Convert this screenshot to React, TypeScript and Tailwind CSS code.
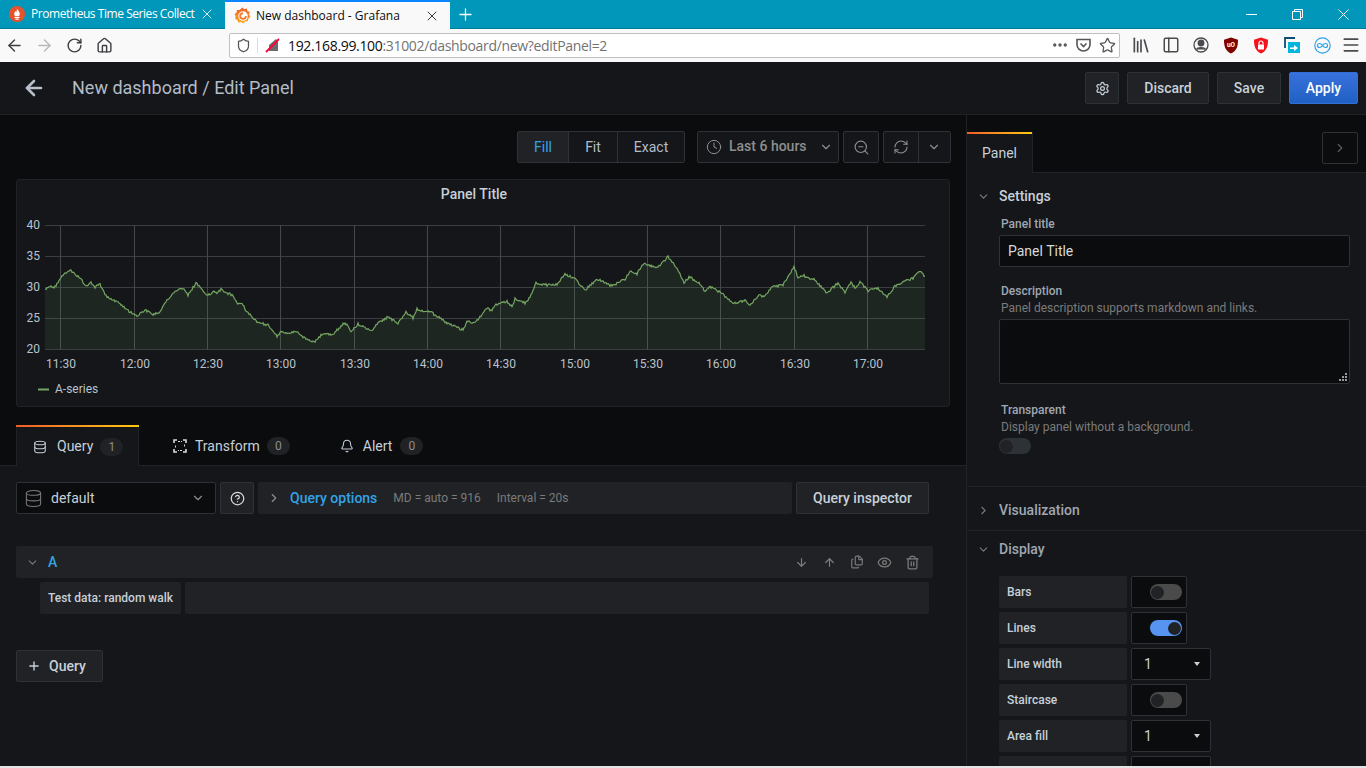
import { ReactNode } from "react";
import {
    ArrowDown,
    ArrowLeft,
    ArrowRight,
    ArrowUp,
    Bell,
    ChevronDown,
    ChevronRight,
    CircleHelp,
    Clock,
    Database,
    Ellipsis,
    Eye,
    Files,
    House,
    Library,
    Menu,
    PanelLeft,
    Plus,
    RefreshCw,
    RotateCw,
    Settings,
    Shield,
    Star,
    Trash2,
    X,
    ZoomOut,
} from "lucide-react";

// hand-read points of the series, jittered below to look like a random walk
const anchors: number[][] = [
    [45, 290], [50, 286], [55, 287], [60, 278], [70, 270], [80, 278], [87, 287], [91, 283], [95, 287], [100, 284],
    [105, 295], [117, 302], [123, 306], [130, 312], [137, 316], [145, 310], [153, 314], [160, 312], [165, 302],
    [175, 292], [183, 288], [188, 295], [196, 283], [207, 296], [213, 292], [218, 293], [221, 289], [227, 293],
    [232, 295], [237, 303], [242, 303], [247, 312], [257, 322], [268, 325], [277, 336], [282, 331], [287, 334],
    [296, 331], [302, 337], [315, 342], [323, 333], [332, 335], [345, 322], [351, 332], [358, 324], [372, 331],
    [378, 323], [388, 317], [398, 323], [406, 312], [413, 318], [417, 309], [432, 313], [447, 323], [463, 330],
    [467, 321], [474, 323], [480, 317], [487, 308], [492, 311], [495, 305], [507, 301], [512, 307], [515, 299],
    [525, 303], [530, 297], [536, 283], [547, 285], [558, 284], [565, 274], [575, 279], [585, 290], [597, 279],
    [612, 286], [625, 279], [630, 271], [637, 274], [643, 264], [658, 267], [668, 257], [677, 268], [684, 283],
    [689, 277], [698, 282], [705, 291], [710, 287], [720, 292], [727, 298], [733, 304], [745, 300], [750, 305],
    [759, 295], [764, 297], [772, 287], [783, 285], [794, 267], [798, 277], [803, 275], [808, 278], [814, 279],
    [827, 293], [838, 283], [845, 292], [851, 282], [855, 288], [860, 282], [868, 291], [878, 288], [887, 297],
    [895, 286], [913, 278], [920, 271], [925, 277],
];

const buildSeries = () => {
    let seed = 17;
    const out: string[] = [];
    let a = 0;
    for (let x = 45; x <= 925; x += 1) {
        while (a < anchors.length - 2 && anchors[a + 1][0] < x) a++;
        const [x0, y0] = anchors[a];
        const [x1, y1] = anchors[a + 1];
        const t = Math.min(1, (x - x0) / (x1 - x0));
        seed = (seed * 1103515245 + 12345) % 2147483648;
        const jitter = (Math.floor(seed / 65536) % 1000) / 1000 - 0.5;
        out.push(`${x - 17},${(y0 + (y1 - y0) * t + jitter * 2.4 - 180).toFixed(1)}`);
    }
    return out;
};

const series = buildSeries();
const hours = ["11:30", "12:00", "12:30", "13:00", "13:30", "14:00", "14:30", "15:00", "15:30", "16:00", "16:30", "17:00"];
const hourX = [60, 134, 207, 280, 354, 427, 500, 574, 647, 720, 794, 867];
const values = [40, 35, 30, 25, 20];

const Chart = () => (
    <svg width="932" height="226" className="block" fontFamily="Roboto, sans-serif" fontSize="12" fill="#b9c2cc">
        <text x="457" y="19" textAnchor="middle" fontSize="14" fontWeight="500" fill="#c7d0d9">
            Panel Title
        </text>
        {values.map((v, i) => (
            <g key={v}>
                <line x1="28" x2="908" y1={45.5 + i * 31} y2={45.5 + i * 31} stroke="#3c3d40" />
                <text x="23" y={49 + i * 31} textAnchor="end">
                    {v}
                </text>
            </g>
        ))}
        {hourX.map((x, i) => (
            <g key={x}>
                <line x1={x - 16.5} x2={x - 16.5} y1="45" y2="169" stroke="#46474a" />
                <text x={x - 16} y="188" textAnchor="middle">
                    {hours[i]}
                </text>
            </g>
        ))}
        <polygon points={`28,169 ${series.join(" ")} 908,169`} fill="#73bf69" fillOpacity="0.1" />
        <polyline points={series.join(" ")} fill="none" stroke="#75a562" strokeWidth="1.2" />
        <line x1="21" x2="32" y1="209.5" y2="209.5" stroke="#75a562" strokeWidth="2" />
        <text x="38" y="213">
            A-series
        </text>
    </svg>
);

const GrafanaLogo = () => (
    <svg width="17" height="17" viewBox="0 0 16 16">
        <defs>
            <linearGradient id="gf" x1="0" y1="1" x2="0" y2="0">
                <stop offset="0" stopColor="#fcb01f" />
                <stop offset="1" stopColor="#f15b2a" />
            </linearGradient>
        </defs>
        <path
            d="M8 .5l1.600 1.600L12 1.500l.6 2.300 2.400.9-1 2.200L15.500 9 13.500 11l-.4 2.400-2.400-.1L8.500 15.500l-2-1.300-2.300.6-.9-2.300L1 11l.6-2.300L.5 6.500l2-1.300.2-2.400 2.400.1z"
            fill="url(#gf)"
        />
        <circle cx="8.500" cy="8.500" r="4.500" fill="#fff" />
        <path d="M8.500 5.800a2.700 2.700 0 1 0 2.700 2.700" fill="none" stroke="#f4792b" strokeWidth="1.700" />
    </svg>
);

const PrometheusLogo = () => (
    <svg width="16" height="16" viewBox="0 0 16 16">
        <circle cx="8" cy="8" r="8" fill="#e6522c" />
        <path d="M8 2.500c.6 1.800 2.800 3 2.800 5.500 0 1-.5 1.800-1 2.300H6.200c-.5-.5-1-1.300-1-2.300 0-1.500 1-2 1.300-3 .5.500.7.900.8 1.300C7.600 5.300 8 4 8 2.500z" fill="#fff" />
        <rect x="5.500" y="11" width="5" height="1" fill="#fff" />
        <rect x="6.200" y="12.500" width="3.600" height="1.200" rx="0.500" fill="#fff" />
    </svg>
);

const TransformIcon = () => (
    <svg width="16" height="16" viewBox="0 0 16 16" fill="none" stroke="#d8d9da" strokeWidth="1.600">
        <path d="M2 5V2h3M11 2h3v3M14 11v3h-3M5 14H2v-3" />
        <path d="M6 3.500h4M12.500 6.500v3M10 12.500H6M3.500 9.500v-3" strokeDasharray="2 1" strokeWidth="1" />
    </svg>
);

const ToolbarExtras = () => (
    <div className="flex items-center ml-[6px] shrink-0 text-[#4a4a4f]">
        <div className="w-[30px] flex justify-center"><Library size={20} strokeWidth={2} /></div>
        <div className="w-[30px] flex justify-center"><PanelLeft size={18} strokeWidth={2} /></div>
        <div className="w-[30px] flex justify-center">
            <svg width="16" height="16" viewBox="0 0 16 16" fill="none" stroke="#4a4a4f" strokeWidth="1.300">
                <circle cx="8" cy="8" r="7" />
                <circle cx="8" cy="6" r="2.800" fill="#4a4a4f" />
                <path d="M3.500 12.500c1-2.500 8-2.500 9 0" fill="#4a4a4f" />
            </svg>
        </div>
        <div className="w-[30px] flex justify-center">
            <svg width="16" height="17" viewBox="0 0 16 17">
                <path d="M8 .5l7 2.200c0 7-1.500 11-7 13.800C2.500 13.700 1 9.700 1 2.700z" fill="#800000" />
                <text x="8" y="10" textAnchor="middle" fontSize="6.500" fill="#fff" fontFamily="Roboto, sans-serif" fontWeight="700">uO</text>
            </svg>
        </div>
        <div className="w-[30px] flex justify-center">
            <svg width="16" height="17" viewBox="0 0 16 17">
                <path d="M8 .5l7 2.200c0 7-1.500 11-7 13.800C2.500 13.700 1 9.700 1 2.700z" fill="#f2131c" />
                <rect x="5" y="7.500" width="6" height="5" rx="0.500" fill="#fff" />
                <path d="M6 7.500V6a2 2 0 0 1 4 0v1.500" fill="none" stroke="#fff" strokeWidth="1.100" />
            </svg>
        </div>
        <div className="w-[31px] flex justify-center">
            <svg width="16" height="16" viewBox="0 0 16 16">
                <path d="M1 11V1h10" fill="none" stroke="#0f4c75" strokeWidth="1.800" />
                <rect x="4" y="5" width="12" height="11" fill="#00b6e0" />
                <path d="M6 10.500h4V8l4 3-4 3v-2H6z" fill="#fff" />
            </svg>
        </div>
        <div className="w-[30px] flex justify-center">
            <svg width="17" height="17" viewBox="0 0 17 17" fill="none" stroke="#2ea3e8" strokeWidth="1.200">
                <circle cx="8.500" cy="8.500" r="7.700" />
                <path d="M8.500 8.500c-1-1.500-2-2-3-2a2 2 0 0 0 0 4c1 0 2-.5 3-2s2-2 3-2a2 2 0 0 1 0 4c-1 0-2-.5-3-2z" />
            </svg>
        </div>
        <div className="w-[28px] flex justify-center"><Menu size={20} strokeWidth={2} /></div>
    </div>
);

const BrowserChrome = () => (
    <>
        <div className="h-[29px] bg-[#0097bb] border-b border-[#007c9a] flex items-stretch shrink-0">
            <div className="w-[225px] flex items-center pl-[9px] pr-[10px] text-white">
                <PrometheusLogo />
                <span className="ml-[6px] flex-1 whitespace-nowrap text-[12px] tracking-[-0.45px]">Prometheus Time Series Collect</span>
                <X size={16} strokeWidth={1.500} className="shrink-0 text-[#d5eef4]" />
            </div>
            <div className="w-[225px] h-[29px] bg-[#f9f9fa] border-t-2 border-[#0a84ff] flex items-center pl-[9px] pr-[10px] text-[#0c0c0d]">
                <GrafanaLogo />
                <span className="ml-[5px] flex-1 whitespace-nowrap text-[12px]">New dashboard - Grafana</span>
                <X size={16} strokeWidth={1.500} className="shrink-0 text-[#3a3a3c]" />
            </div>
            <div className="w-[31px] flex items-center justify-center text-white">
                <Plus size={19} strokeWidth={1.600} />
            </div>
            <div className="flex-1" />
            <div className="flex items-center text-white">
                <div className="w-[46px] flex justify-center">
                    <svg width="11" height="11" viewBox="0 0 11 11" stroke="currentColor"><path d="M0 5.500h11" /></svg>
                </div>
                <div className="w-[46px] flex justify-center">
                    <svg width="11" height="11" viewBox="0 0 11 11" fill="none" stroke="currentColor">
                        <path d="M.5 2.500h8v8h-8zM2.500 2.500v-2h8v8h-2" />
                    </svg>
                </div>
                <div className="w-[46px] flex justify-center">
                    <svg width="11" height="11" viewBox="0 0 11 11" stroke="currentColor"><path d="M.5.500l10 10M10.500.500l-10 10" /></svg>
                </div>
            </div>
        </div>
        <div className="h-[33px] bg-[#f9f9fa] flex items-center pl-[5px] pb-[1px] shrink-0">
            <ArrowLeft size={19} strokeWidth={1.800} className="text-[#3e3e42]" />
            <ArrowRight size={19} strokeWidth={1.800} className="ml-[11px] text-[#b8b8ba]" />
            <RotateCw size={17} strokeWidth={2} className="ml-[12px] text-[#3e3e42]" />
            <House size={17} strokeWidth={2} className="ml-[13px] text-[#3e3e42]" />
            <div className="ml-[116px] w-[891px] shrink-0 h-[25px] bg-white border border-[#c0c0c2] rounded-[2px] flex items-center pl-[6px] pr-[3px]">
                <Shield size={15} strokeWidth={2} className="text-[#55555a]" />
                <div className="w-px h-[15px] bg-[#dcdcde] ml-[6px]" />
                <svg width="16" height="16" viewBox="0 0 16 16" className="ml-[7px]">
                    <path d="M4 14V8l7-6 2 3v9z" fill="#6a6a6e" />
                    <path d="M1 15L14 2" stroke="#ff0039" strokeWidth="1.800" />
                </svg>
                <div className="ml-[7px] flex-1 text-[14px] whitespace-nowrap tracking-[-0.33px]">
                    <span className="text-[#0c0c0d]">192.168.99.100</span>
                    <span className="text-[#737373]">:31002/dashboard/new?editPanel=2</span>
                </div>
                <Ellipsis size={18} strokeWidth={2.500} className="text-[#55555a]" />
                <svg width="17" height="17" viewBox="0 0 17 17" fill="none" stroke="#55555a" strokeWidth="1.600" className="ml-[6px]">
                    <path d="M2 2.500h13v5a6.500 6.500 0 0 1-13 0z" />
                    <path d="M5.500 6.500l3 3 3-3" />
                </svg>
                <Star size={17} strokeWidth={1.800} className="ml-[7px] text-[#55555a]" />
            </div>
            <ToolbarExtras />
        </div>
    </>
);

const HeaderButton = ({ children, className }: { children: ReactNode; className?: string }) => (
    <div className={`h-[32px] flex items-center justify-center bg-[#202226] border border-[#2c3235] rounded-[2px] text-[14px] font-medium text-[#c7d0d9] ${className}`}>
        {children}
    </div>
);

const Header = () => (
    <div className="h-[53px] bg-[#141619] border-b border-[#202226] flex items-center shrink-0 pr-[8px]">
        <ArrowLeft size={24} strokeWidth={2.600} className="ml-[22px] text-[#b7c0ca]" />
        <span className="ml-[26px] pb-[2px] text-[18px] text-[#b3bcc7]">New dashboard / Edit Panel</span>
        <div className="flex-1" />
        <HeaderButton className="w-[34px]"><Settings size={15} /></HeaderButton>
        <HeaderButton className="w-[82px] ml-[8px]">Discard</HeaderButton>
        <HeaderButton className="w-[64px] ml-[8px]">Save</HeaderButton>
        <div className="w-[69px] h-[32px] ml-[8px] flex items-center justify-center rounded-[2px] text-[14px] font-medium text-white bg-gradient-to-b from-[#3871dc] to-[#1f60c4] border border-[#2f6fd6]">
            Apply
        </div>
    </div>
);

const ViewToolbar = () => (
    <div className="h-[32px] mt-[16px] flex justify-end pr-[15px] text-[14px] text-[#8e8e8e]">
        <div className="flex border border-[#2c3235] rounded-[2px] h-[32px]">
            <div className="w-[51px] flex items-center justify-center bg-[#202226] text-[#33a2e5] border-r border-[#2c3235]">Fill</div>
            <div className="w-[49px] flex items-center justify-center bg-[#141619] text-[#b3bcc7] border-r border-[#2c3235]">Fit</div>
            <div className="flex-1 w-[66px] flex items-center justify-center bg-[#141619] text-[#b3bcc7]">Exact</div>
        </div>
        <div className="ml-[12px] w-[142px] flex items-center bg-[#141619] border border-[#2c3235] rounded-[2px] pl-[8px]">
            <Clock size={16} strokeWidth={1.500} />
            <span className="ml-[7px] pb-[2px] font-medium">Last 6 hours</span>
            <ChevronDown size={14} className="ml-[12px]" />
        </div>
        <div className="ml-[4px] w-[36px] flex items-center justify-center bg-[#141619] border border-[#2c3235] rounded-[2px]">
            <ZoomOut size={17} strokeWidth={1.600} />
        </div>
        <div className="ml-[4px] flex bg-[#141619] border border-[#2c3235] rounded-[2px]">
            <div className="w-[35px] flex items-center justify-center border-r border-[#2c3235]">
                <RefreshCw size={16} strokeWidth={1.600} />
            </div>
            <div className="w-[31px] pr-[1px] flex items-center justify-center">
                <ChevronDown size={14} />
            </div>
        </div>
    </div>
);

const Count = ({ n }: { n: number }) => (
    <span className="ml-[7px] w-[23px] h-[18px] rounded-full bg-[#202226] text-[12px] text-[#8e8e8e] flex items-center justify-center">{n}</span>
);

const QueryTabs = () => (
    <div className="mt-[18px] h-[41px] flex border-b border-[#202226] pl-[16px] pt-[1px] text-[14px] text-[#c7d0d9]">
        <div className="relative w-[123px] h-[40px] bg-[#141619] border-x border-[#202226] flex items-center pl-[16px] pt-[1px]">
            <div className="absolute -left-px -right-px -top-px h-[2px] bg-gradient-to-r from-[#f05a28] to-[#fbca0a]" />
            <Database size={14} strokeWidth={1.800} />
            <span className="ml-[10px]">Query</span>
            <Count n={1} />
        </div>
        <div className="flex items-center ml-[33px] pt-[1px]">
            <TransformIcon />
            <span className="ml-[7px]">Transform</span>
            <Count n={0} />
        </div>
        <div className="flex items-center ml-[50px] pt-[1px]">
            <Bell size={14} strokeWidth={1.800} />
            <span className="ml-[9px] mr-[1px]">Alert</span>
            <Count n={0} />
        </div>
    </div>
);

const QueryEditor = () => (
    <div className="flex-1 bg-[#141619] pl-[16px] text-[14px]">
        <div className="mt-[16px] h-[32px] flex">
            <div className="w-[200px] bg-[#0b0c0e] border border-[#2c3235] rounded-[2px] flex items-center pl-[7px] pr-[10px] text-[#c7d0d9]">
                <Database size={19} strokeWidth={1.300} className="text-[#7b7b7b]" />
                <span className="ml-[8px] flex-1">default</span>
                <ChevronDown size={14} className="text-[#8e8e8e]" />
            </div>
            <div className="ml-[4px] w-[34px] bg-[#202226] border border-[#2c3235] rounded-[2px] flex items-center justify-center text-[#d8d9da]">
                <CircleHelp size={15} />
            </div>
            <div className="ml-[4px] w-[534px] bg-[#202226] rounded-[2px] flex items-center pl-[9px]">
                <ChevronRight size={14} className="text-[#8e8e8e]" />
                <span className="ml-[9px] font-medium text-[#33a2e5]">Query options</span>
                <span className="ml-[16px] text-[12px] text-[#7b7b7b]">MD = auto = 916</span>
                <span className="ml-[16px] text-[12px] text-[#7b7b7b]">Interval = 20s</span>
            </div>
            <div className="ml-[4px] w-[133px]">
                <HeaderButton className="w-full">Query inspector</HeaderButton>
            </div>
        </div>
        <div className="mt-[32px] w-[917px] h-[32px] bg-[#202226] rounded-[2px] flex items-center pl-[10px] pr-[13px] text-[#7b7b7b]">
            <ChevronDown size={13} />
            <span className="ml-[9px] font-medium text-[#33a2e5]">A</span>
            <div className="flex-1" />
            <ArrowDown size={13} strokeWidth={2.200} />
            <ArrowUp size={13} strokeWidth={2.200} className="ml-[15px]" />
            <Files size={14} className="ml-[14px]" />
            <Eye size={15} className="ml-[13px]" />
            <Trash2 size={15} className="ml-[13px]" />
        </div>
        <div className="mt-[4px] h-[32px] flex pl-[24px]">
            <div className="w-[141px] bg-[#202226] rounded-[2px] flex items-center pl-[8px] text-[12px] font-medium text-[#c7d0d9]">
                Test data: random walk
            </div>
            <div className="ml-[4px] w-[744px] bg-[#202226] rounded-[2px]" />
        </div>
        <div className="mt-[36px] w-[87px]">
            <HeaderButton className="w-full justify-start pl-[10px]">
                <Plus size={14} strokeWidth={2.400} />
                <span className="ml-[8px]">Query</span>
            </HeaderButton>
        </div>
    </div>
);

const Toggle = ({ on }: { on?: boolean }) => (
    <div className={`w-[32px] h-[16px] rounded-full flex items-center px-[1px] ${on ? "bg-[#5794f2] justify-end" : "bg-[#4a4a4a]"}`}>
        <div className="w-[13px] h-[13px] rounded-full bg-[#202226]" />
    </div>
);

const OptionRow = ({ label, toggle, on, value }: { label?: string; toggle?: boolean; on?: boolean; value?: string }) => (
    <div className="mt-[4px] h-[32px] flex shrink-0">
        <div className="w-[128px] bg-[#202226] rounded-[2px] flex items-center pl-[8px] text-[12px] font-medium text-[#c7d0d9]">{label}</div>
        {toggle ? (
            <div className="ml-[4px] w-[56px] bg-[#0b0c0e] border border-[#2c3235] rounded-[2px] flex items-center justify-end pr-[4px]">
                <Toggle on={on} />
            </div>
        ) : (
            <div className="ml-[4px] w-[80px] bg-[#0b0c0e] border border-[#2c3235] rounded-[2px] flex items-center pl-[12px] pr-[10px] text-[14px] text-[#c7d0d9]">
                <span className="flex-1">{value}</span>
                <span className="w-0 h-0 border-x-[3.500px] border-x-transparent border-t-[4px] border-t-[#c7d0d9]" />
            </div>
        )}
    </div>
);

const SidePanel = () => (
    <div className="w-[400px] border-l border-[#202226] flex flex-col">
        <div className="h-[58px] pt-[17px] flex pr-[8px] border-b border-[#202226] shrink-0">
            <div className="relative w-[66px] h-[41px] bg-[#141619] border-r border-[#202226] flex items-center justify-center pt-[2px] text-[14px] text-[#c7d0d9]">
                <div className="absolute left-0 right-0 top-0 h-[2px] bg-gradient-to-r from-[#f05a28] to-[#fbca0a]" />
                Panel
            </div>
            <div className="flex-1" />
            <div className="w-[36px] h-[32px] border border-[#2c3235] rounded-[2px] flex items-center justify-center text-[#5e5e5e]">
                <ChevronRight size={14} />
            </div>
        </div>
        <div className="flex-1 bg-[#141619] overflow-hidden text-[12px]">
            <div className="h-[314px] border-b border-[#202226] shrink-0">
                <div className="h-[44px] flex items-center pl-[10px] pt-[2px] text-[14px] font-medium text-[#c7d0d9]">
                    <ChevronDown size={13} className="text-[#7b7b7b]" />
                    <span className="ml-[9px]">Settings</span>
                </div>
                <div className="pl-[32px] w-[383px]">
                    <div className="pl-[2px] h-[15px] leading-[15px] font-medium text-[#9fa7b3]">Panel title</div>
                    <div className="mt-[3px] h-[32px] bg-[#0b0c0e] border border-[#2c3235] rounded-[2px] flex items-center pl-[8px] text-[14px] text-[#d8d9da]">
                        Panel Title
                    </div>
                    <div className="mt-[17px] pl-[2px] h-[15px] leading-[15px] font-medium text-[#9fa7b3]">Description</div>
                    <div className="mt-[2px] pl-[2px] h-[15px] leading-[15px] text-[#7b7b7b]">Panel description supports markdown and links.</div>
                    <div className="relative mt-[3px] h-[65px] bg-[#0b0c0e] border border-[#2c3235] rounded-[2px]">
                        <svg width="8" height="8" viewBox="0 0 8 8" fill="#9a9a9a" className="absolute right-[2px] bottom-[2px]">
                            <rect x="6" y="0" width="2" height="2" />
                            <rect x="3" y="3" width="2" height="2" />
                            <rect x="6" y="3" width="2" height="2" />
                            <rect x="0" y="6" width="2" height="2" />
                            <rect x="3" y="6" width="2" height="2" />
                            <rect x="6" y="6" width="2" height="2" />
                        </svg>
                    </div>
                    <div className="mt-[19px] pl-[2px] h-[15px] leading-[15px] font-medium text-[#9fa7b3]">Transparent</div>
                    <div className="mt-[2px] pl-[2px] h-[15px] leading-[15px] text-[#7b7b7b]">Display panel without a background.</div>
                    <div className="mt-[3px] w-[32px] h-[16px] rounded-full bg-[#2c3235] flex items-center px-[1px]">
                        <div className="w-[13px] h-[13px] rounded-full bg-[#202226]" />
                    </div>
                </div>
            </div>
            <div className="h-[44px] flex items-center pl-[10px] pt-[4px] border-b border-[#202226] text-[14px] font-medium text-[#9fa7b3]">
                <ChevronRight size={13} className="text-[#7b7b7b]" />
                <span className="ml-[9px]">Visualization</span>
            </div>
            <div className="h-[37px] flex items-center pl-[10px] text-[14px] font-medium text-[#9fa7b3]">
                <ChevronDown size={13} className="text-[#7b7b7b]" />
                <span className="ml-[9px]">Display</span>
            </div>
            <div className="pl-[32px] pt-[4px] flex flex-col">
                <OptionRow label="Bars" toggle />
                <OptionRow label="Lines" toggle on />
                <OptionRow label="Line width" value="1" />
                <OptionRow label="Staircase" toggle />
                <OptionRow label="Area fill" value="1" />
                <OptionRow value="" />
            </div>
        </div>
    </div>
);

const App = () => (
    <div className="w-[1366px] h-[768px] overflow-hidden flex flex-col bg-[#0b0c0e] font-['Roboto',sans-serif]">
        <div className="font-['Open_Sans',sans-serif]">
            <BrowserChrome />
        </div>
        <Header />
        <div className="flex-1 flex min-h-0">
            <div className="w-[966px] flex flex-col">
                <ViewToolbar />
                <div className="mt-[16px] ml-[16px] w-[934px] h-[228px] bg-[#141619] border border-[#202226] rounded-[3px] shrink-0">
                    <Chart />
                </div>
                <QueryTabs />
                <QueryEditor />
            </div>
            <SidePanel />
        </div>
        <div className="h-[2px] bg-[#e4e4e4] shrink-0" />
    </div>
);

export default App;
